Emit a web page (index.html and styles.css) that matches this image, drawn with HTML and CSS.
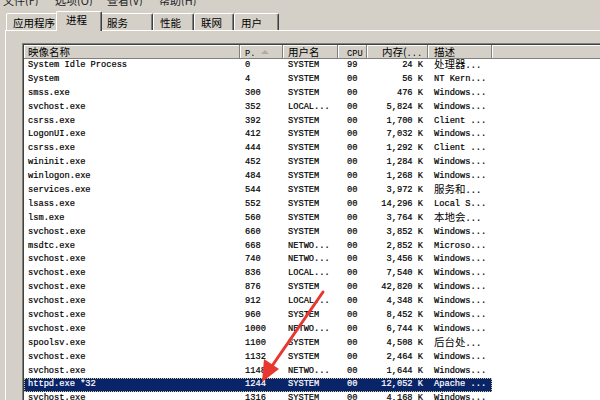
FILE: index.html
```html
<!DOCTYPE html>
<html lang="zh">
<head>
<meta charset="utf-8">
<title>Windows 任务管理器</title>
<link rel="stylesheet" href="styles.css">
</head>
<body>
<div class="menubar">
  <div class="menu"><span class="menu-text">文件(F)</span></div>
  <div class="menu"><span class="menu-text">选项(O)</span></div>
  <div class="menu"><span class="menu-text">查看(V)</span></div>
  <div class="menu"><span class="menu-text">帮助(H)</span></div>
</div>
<div class="tabs">
  <div class="tab t1">应用程序</div>
  <div class="tab t2 active">进程</div>
  <div class="tab t3">服务</div>
  <div class="tab t4">性能</div>
  <div class="tab t5">联网</div>
  <div class="tab t6">用户</div>
</div>
<div class="panel">
  <div class="listview">
    <div class="lv-inner">
      <div class="lv-head">
        <div class="hc c-name">映像名称</div>
        <div class="hc c-pid"><span class="mono">P.</span><span class="sort"></span></div>
        <div class="hc c-user">用户名</div>
        <div class="hc c-cpu"><span class="mono">CPU</span></div>
        <div class="hc c-mem-h">内存(<span class="mono">...</span></div>
        <div class="hc c-desc">描述</div>
        <div class="hc c-fill"></div>
      </div>
      <div class="rows">
        <div class="row"><div class="c-name">System Idle Process</div><div class="c-pid">0</div><div class="c-user">SYSTEM</div><div class="c-cpu">99</div><div class="c-mem">24 K</div><div class="c-desc"><span class="cjk">处理器</span>...</div></div>
        <div class="row"><div class="c-name">System</div><div class="c-pid">4</div><div class="c-user">SYSTEM</div><div class="c-cpu">00</div><div class="c-mem">56 K</div><div class="c-desc">NT Kern...</div></div>
        <div class="row"><div class="c-name">smss.exe</div><div class="c-pid">300</div><div class="c-user">SYSTEM</div><div class="c-cpu">00</div><div class="c-mem">476 K</div><div class="c-desc">Windows...</div></div>
        <div class="row"><div class="c-name">svchost.exe</div><div class="c-pid">352</div><div class="c-user">LOCAL...</div><div class="c-cpu">00</div><div class="c-mem">5,824 K</div><div class="c-desc">Windows...</div></div>
        <div class="row"><div class="c-name">csrss.exe</div><div class="c-pid">392</div><div class="c-user">SYSTEM</div><div class="c-cpu">00</div><div class="c-mem">1,700 K</div><div class="c-desc">Client ...</div></div>
        <div class="row"><div class="c-name">LogonUI.exe</div><div class="c-pid">412</div><div class="c-user">SYSTEM</div><div class="c-cpu">00</div><div class="c-mem">7,032 K</div><div class="c-desc">Windows...</div></div>
        <div class="row"><div class="c-name">csrss.exe</div><div class="c-pid">444</div><div class="c-user">SYSTEM</div><div class="c-cpu">00</div><div class="c-mem">1,292 K</div><div class="c-desc">Client ...</div></div>
        <div class="row"><div class="c-name">wininit.exe</div><div class="c-pid">452</div><div class="c-user">SYSTEM</div><div class="c-cpu">00</div><div class="c-mem">1,284 K</div><div class="c-desc">Windows...</div></div>
        <div class="row"><div class="c-name">winlogon.exe</div><div class="c-pid">484</div><div class="c-user">SYSTEM</div><div class="c-cpu">00</div><div class="c-mem">1,268 K</div><div class="c-desc">Windows...</div></div>
        <div class="row"><div class="c-name">services.exe</div><div class="c-pid">544</div><div class="c-user">SYSTEM</div><div class="c-cpu">00</div><div class="c-mem">3,972 K</div><div class="c-desc"><span class="cjk">服务和</span>...</div></div>
        <div class="row"><div class="c-name">lsass.exe</div><div class="c-pid">552</div><div class="c-user">SYSTEM</div><div class="c-cpu">00</div><div class="c-mem">14,296 K</div><div class="c-desc">Local S...</div></div>
        <div class="row"><div class="c-name">lsm.exe</div><div class="c-pid">560</div><div class="c-user">SYSTEM</div><div class="c-cpu">00</div><div class="c-mem">3,764 K</div><div class="c-desc"><span class="cjk">本地会</span>...</div></div>
        <div class="row"><div class="c-name">svchost.exe</div><div class="c-pid">660</div><div class="c-user">SYSTEM</div><div class="c-cpu">00</div><div class="c-mem">3,852 K</div><div class="c-desc">Windows...</div></div>
        <div class="row"><div class="c-name">msdtc.exe</div><div class="c-pid">668</div><div class="c-user">NETWO...</div><div class="c-cpu">00</div><div class="c-mem">2,852 K</div><div class="c-desc">Microso...</div></div>
        <div class="row"><div class="c-name">svchost.exe</div><div class="c-pid">740</div><div class="c-user">NETWO...</div><div class="c-cpu">00</div><div class="c-mem">3,456 K</div><div class="c-desc">Windows...</div></div>
        <div class="row"><div class="c-name">svchost.exe</div><div class="c-pid">836</div><div class="c-user">LOCAL...</div><div class="c-cpu">00</div><div class="c-mem">7,540 K</div><div class="c-desc">Windows...</div></div>
        <div class="row"><div class="c-name">svchost.exe</div><div class="c-pid">876</div><div class="c-user">SYSTEM</div><div class="c-cpu">00</div><div class="c-mem">42,820 K</div><div class="c-desc">Windows...</div></div>
        <div class="row"><div class="c-name">svchost.exe</div><div class="c-pid">912</div><div class="c-user">LOCAL...</div><div class="c-cpu">00</div><div class="c-mem">4,348 K</div><div class="c-desc">Windows...</div></div>
        <div class="row"><div class="c-name">svchost.exe</div><div class="c-pid">960</div><div class="c-user">SYSTEM</div><div class="c-cpu">00</div><div class="c-mem">8,452 K</div><div class="c-desc">Windows...</div></div>
        <div class="row"><div class="c-name">svchost.exe</div><div class="c-pid">1000</div><div class="c-user">NETWO...</div><div class="c-cpu">00</div><div class="c-mem">6,744 K</div><div class="c-desc">Windows...</div></div>
        <div class="row"><div class="c-name">spoolsv.exe</div><div class="c-pid">1100</div><div class="c-user">SYSTEM</div><div class="c-cpu">00</div><div class="c-mem">4,508 K</div><div class="c-desc"><span class="cjk">后台处</span>...</div></div>
        <div class="row"><div class="c-name">svchost.exe</div><div class="c-pid">1132</div><div class="c-user">SYSTEM</div><div class="c-cpu">00</div><div class="c-mem">2,464 K</div><div class="c-desc">Windows...</div></div>
        <div class="row"><div class="c-name">svchost.exe</div><div class="c-pid">1148</div><div class="c-user">NETWO...</div><div class="c-cpu">00</div><div class="c-mem">1,644 K</div><div class="c-desc">Windows...</div></div>
        <div class="row sel"><div class="c-name">httpd.exe *32</div><div class="c-pid">1244</div><div class="c-user">SYSTEM</div><div class="c-cpu">00</div><div class="c-mem">12,052 K</div><div class="c-desc">Apache ...</div></div>
        <div class="row"><div class="c-name">svchost.exe</div><div class="c-pid">1316</div><div class="c-user">SYSTEM</div><div class="c-cpu">00</div><div class="c-mem">4,168 K</div><div class="c-desc">Windows...</div></div>
      </div>
    </div>
  </div>
</div>
<svg class="arrow" width="600" height="400" viewBox="0 0 600 400">
  <line x1="323" y1="292" x2="272" y2="366" stroke="#e8372e" stroke-width="3" stroke-linecap="round"/>
  <polygon points="262,382 264,359 279,369" fill="#e8372e"/>
</svg>
</body>
</html>
```

FILE: styles.css
```css
html, body {
  margin: 0;
  padding: 0;
}
body {
  width: 600px;
  height: 400px;
  overflow: hidden;
  position: relative;
  background: #d4d0c8;
  color: #000;
  font-family: "Noto Sans CJK SC", "Liberation Sans", sans-serif;
}

/* menu bar, mostly scrolled off the top */
.menubar {
  height: 11px;
  display: flex;
  padding-left: 3px;
  font-size: 11px;
}
.menu {
  width: 52px;
  height: 6px;
  overflow: hidden;
  white-space: nowrap;
  color: #222;
}
.menu-text {
  display: block;
  line-height: 12px;
  margin-top: -6px;
}

/* tabs */
.tabs {
  display: flex;
  align-items: flex-end;
  height: 19px;
  padding-left: 6px;
}
.tab {
  box-sizing: border-box;
  height: 17px;
  padding-left: 6px;
  padding-top: 1px;
  line-height: 15px;
  font-size: 10.5px;
  white-space: nowrap;
  border-top: 1px solid #fff;
  border-left: 1px solid #fff;
  border-right: 1px solid #404040;
  border-radius: 2px 2px 0 0;
  box-shadow: inset -1px 0 #808080;
  background: #d4d0c8;
}
.t1 { width: 52px; }
.t2 { width: 42px; }
.t3 { width: 53px; }
.t4 { width: 41px; }
.t5 { width: 40px; }
.t6 { width: 45px; }
.tab.active {
  width: 46px;
  height: 20px;
  margin: 0 -2px -1px;
  padding-left: 9px;
  padding-top: 0;
  line-height: 16px;
  position: relative;
  z-index: 1;
}

/* panel */
.panel {
  margin-left: 5px;
  border-top: 1px solid #fff;
  border-left: 1px solid #fff;
  padding: 12px 0 0 16px;
}

.listview {
  border-left: 1px solid #808080;
  border-top: 1px solid #808080;
  background: #fff;
  height: 420px;
}
.lv-inner {
  border-left: 1px solid #404040;
  border-top: 1px solid #404040;
  height: 100%;
}

.lv-head {
  display: flex;
  height: 14px;
}
.hc {
  box-sizing: border-box;
  flex: none;
  height: 14px;
  background: #d4d0c8;
  border-right: 1px solid #808080;
  border-bottom: 1px solid #808080;
  box-shadow: inset 1px 1px #fff;
  font-size: 10.5px;
  line-height: 13px;
  white-space: nowrap;
  overflow: hidden;
}
.mono {
  font-family: "Liberation Mono", monospace;
  font-size: 8.7px;
}
.sort {
  display: inline-block;
  width: 0;
  height: 0;
  margin-left: 6px;
  vertical-align: 2px;
  border-left: 4px solid transparent;
  border-right: 4px solid transparent;
  border-bottom: 4px solid #b0aca4;
}
.c-fill {
  flex: 1;
  border-right: none;
}

/* column geometry, shared by header and rows */
.c-name { width: 216px; padding-left: 4px; }
.c-pid  { width: 43px;  padding-left: 5px; }
.c-user { width: 55px;  padding-left: 5px; }
.c-cpu  { width: 29px;  padding-left: 9px; }
.c-mem-h { width: 61px; padding-left: 15px; }
.c-mem  { width: 61px;  padding-right: 5px; text-align: right; }
.c-desc { width: 64px;  padding-left: 6px; }

.rows .row {
  display: flex;
  width: 468px;
  height: 13.9px;
  line-height: 13.9px;
  font-family: "Liberation Mono", monospace;
  font-size: 8.7px;
  white-space: nowrap;
  -webkit-text-stroke: 0.2px #000;
}
.row > div {
  box-sizing: border-box;
  flex: none;
  overflow: hidden;
}
.cjk {
  font-family: "Noto Sans CJK SC", sans-serif;
  font-size: 10.5px;
  line-height: 1;
  -webkit-text-stroke: 0;
}
.row.sel {
  background: #0a246a;
  color: #fff;
  -webkit-text-stroke: 0.2px #fff;
  outline: 1px dotted #d8c880;
  outline-offset: -1px;
}

.arrow {
  position: absolute;
  left: 0;
  top: 0;
  pointer-events: none;
}
```
